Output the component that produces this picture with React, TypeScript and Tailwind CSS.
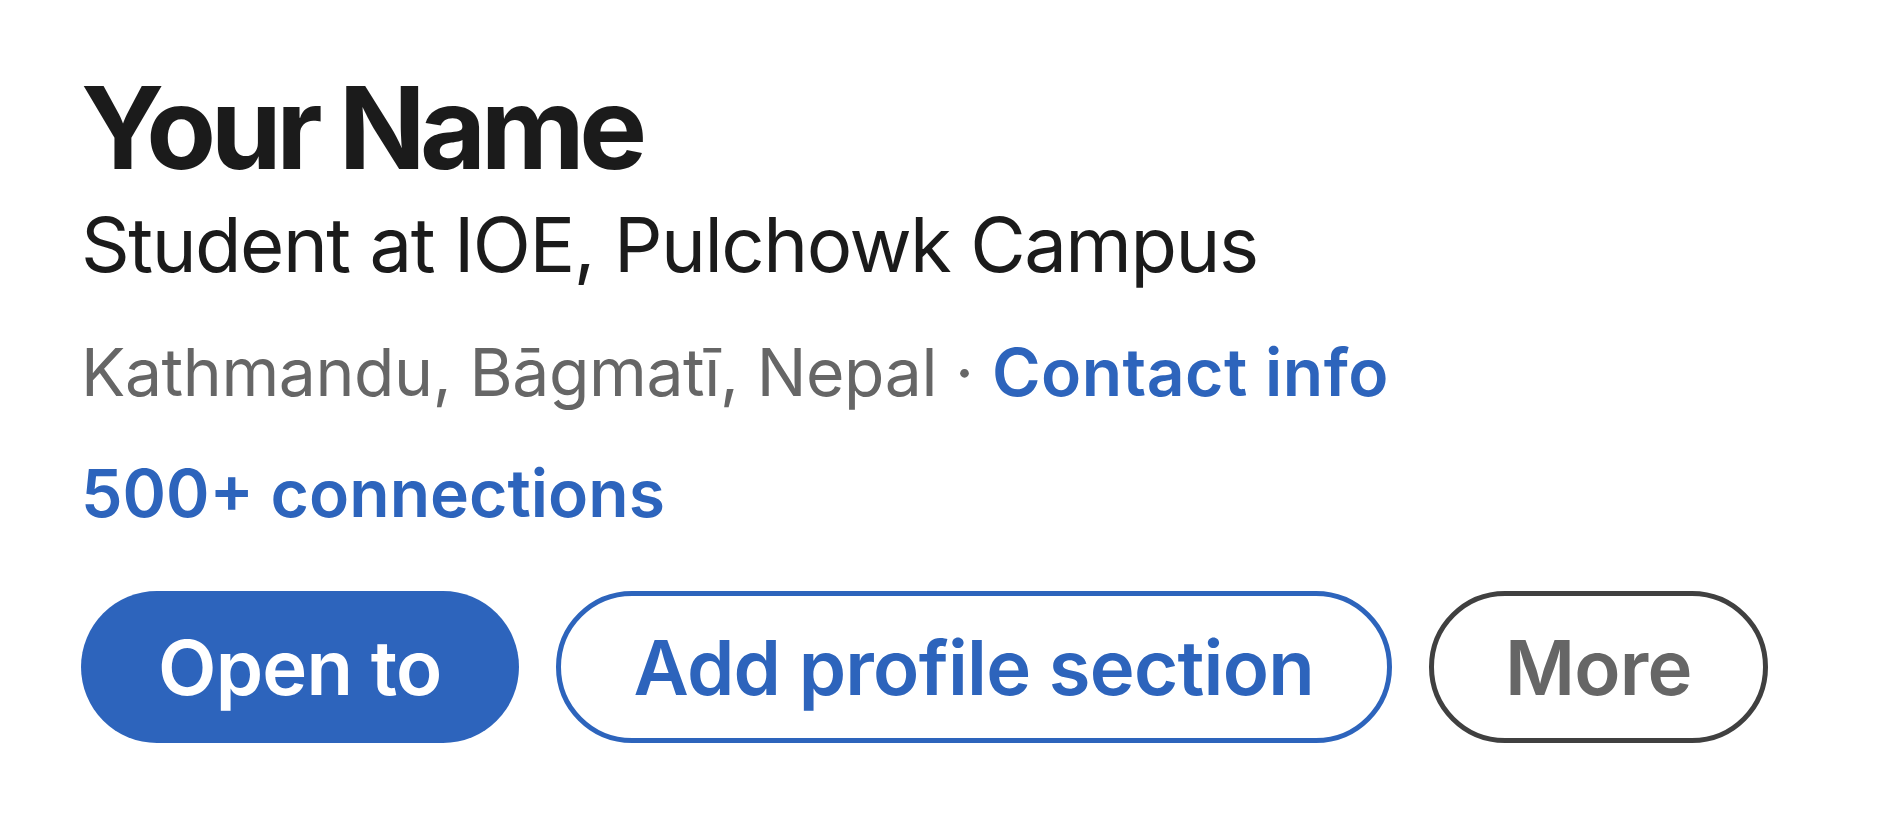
import React from "react";

const App = () => {
  return (
    <div
      className="w-[1892px] h-[822px] bg-white pl-[81px] pt-[57px]"
      style={{ fontFamily: "Inter, 'Noto Sans', sans-serif" }}
    >
      <div className="text-[114px] font-bold leading-[142px] text-[#1b1b1b] tracking-[-5.5px]">
        Your Name
      </div>
      <div className="text-[76px] leading-[90px] text-[#1b1b1b] tracking-[-1.5px]">
        Student at IOE, Pulchowk Campus
      </div>
      <div className="mt-[33px] text-[66px] leading-[100px] text-[#666666]">
        <span className="tracking-[-0.4px]">Kathmandu, Bāgmatī, Nepal · </span>
        <span className="font-semibold text-[#2d64bc] tracking-[0.5px]">Contact info</span>
      </div>
      <div className="mt-[21px] text-[66px] leading-[100px] font-semibold text-[#2d64bc]">
        500+ connections
      </div>
      <div className="mt-[48px] flex gap-[37px] text-[76px] font-semibold tracking-[-0.75px]">
        <button className="h-[152px] rounded-full bg-[#2d64bc] px-[77px] text-white">
          Open to
        </button>
        <button className="h-[152px] rounded-full border-[5px] border-[#2d64bc] bg-white px-[73px] text-[#2d64bc]">
          Add profile section
        </button>
        <button className="h-[152px] rounded-full border-[5px] border-[#404040] bg-white px-[71px] text-[#666666]">
          More
        </button>
      </div>
    </div>
  );
};

export default App;
